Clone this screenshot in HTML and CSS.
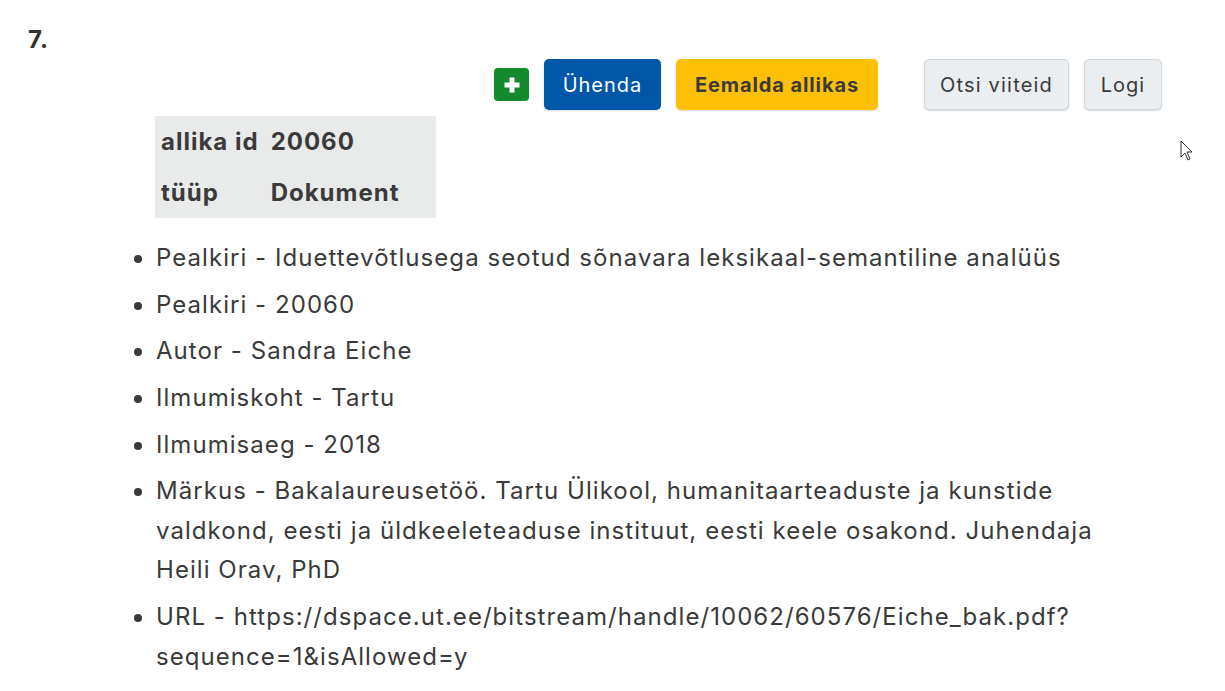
FILE: index.html
```html
<!DOCTYPE html>
<html lang="et">
<head>
<meta charset="utf-8">
<link rel="stylesheet" href="styles.css">
</head>
<body>
<div class="page">
  <div class="num">7.</div>
  <div class="toolbar">
    <span class="add-btn"><svg width="20" height="20" viewBox="0 0 20 20"><path d="M7.5 2.5h5v5h5v5h-5v5h-5v-5h-5v-5h5z" fill="#fff"/></svg></span>
    <button class="btn btn-blue">Ühenda</button>
    <button class="btn btn-yellow">Eemalda allikas</button>
    <button class="btn btn-light gap">Otsi viiteid</button>
    <button class="btn btn-light">Logi</button>
  </div>
  <table class="info">
    <tr><td>allika id</td><td>20060</td></tr>
    <tr><td>tüüp</td><td>Dokument</td></tr>
  </table>
  <ul class="fields">
    <li>Pealkiri - Iduettevõtlusega seotud sõnavara leksikaal-semantiline analüüs</li>
    <li>Pealkiri - 20060</li>
    <li>Autor - Sandra Eiche</li>
    <li>Ilmumiskoht - Tartu</li>
    <li>Ilmumisaeg - 2018</li>
    <li>Märkus - Bakalaureusetöö. Tartu Ülikool, humanitaarteaduste ja kunstide valdkond, eesti ja üldkeeleteaduse instituut, eesti keele osakond. Juhendaja Heili Orav, PhD</li>
    <li>URL - https://dspace.ut.ee/bitstream/handle/10062/60576/Eiche_bak.pdf?sequence=1&amp;isAllowed=y</li>
  </ul>
  <svg class="cursor" width="14" height="22" viewBox="0 0 14 22"><path d="M1 1v16l4-4 3 7 2-1-3-7h5z" fill="#fff" stroke="#333" stroke-width="1"/></svg>
</div>
</body>
</html>
```

FILE: styles.css
```css
html, body {
  margin: 0;
  padding: 0;
  background: #fff;
}
body {
  font-family: Inter, "Noto Sans", sans-serif;
  color: #3a3a3a;
}
.page {
  position: relative;
  width: 1225px;
  height: 691px;
  overflow: hidden;
  padding: 24px 0 0 28px;
  box-sizing: border-box;
}
.num {
  font-size: 24px;
  font-weight: 700;
  line-height: 32px;
  color: #333;
  letter-spacing: 1px;
}
.toolbar {
  display: flex;
  align-items: center;
  margin-top: 3px;
  margin-left: 466px;
  height: 51px;
}
.add-btn {
  width: 35px;
  height: 33px;
  background: #138a2e;
  border-radius: 4px;
  display: flex;
  align-items: center;
  justify-content: center;
  margin-right: 15px;
}
.btn {
  font-family: inherit;
  font-size: 20px;
  letter-spacing: 1px;
  height: 51px;
  border-radius: 5px;
  padding: 0 6px;
  border: 1px solid transparent;
  margin-right: 15px;
  box-shadow: 0 1px 2px rgba(0,0,0,0.15);
  white-space: nowrap;
}
.btn-blue {
  background: #0057a8;
  color: #fff;
  width: 117px;
}
.btn-yellow {
  background: #fec007;
  color: #3a3a3a;
  font-weight: 700;
  width: 202px;
  letter-spacing: 0.9px;
}
.btn-light {
  background: #ebeef1;
  border-color: #cfd6dc;
  color: #3a3a3a;
}
.btn-light.gap {
  margin-left: 31px;
  width: 145px;
  letter-spacing: 1.2px;
}
.btn-light:last-child {
  width: 78px;
}
.info {
  margin-left: 127px;
  margin-top: 6px;
  background: #e9eaea;
  border-collapse: collapse;
  font-size: 24px;
  font-weight: 700;
  letter-spacing: 1px;
  width: 281px;
  white-space: nowrap;
}
.info td {
  height: 51px;
  padding: 0 6px;
  vertical-align: middle;
}
.info td:first-child {
  width: 96px;
}
.fields {
  margin: 20px 0 0 0;
  padding-left: 128px;
  font-size: 24px;
  line-height: 39.5px;
  letter-spacing: 1.05px;
  width: 945px;
}
.fields li {
  margin-bottom: 7.2px;
}
.cursor {
  position: absolute;
  left: 1180px;
  top: 140px;
}
```
